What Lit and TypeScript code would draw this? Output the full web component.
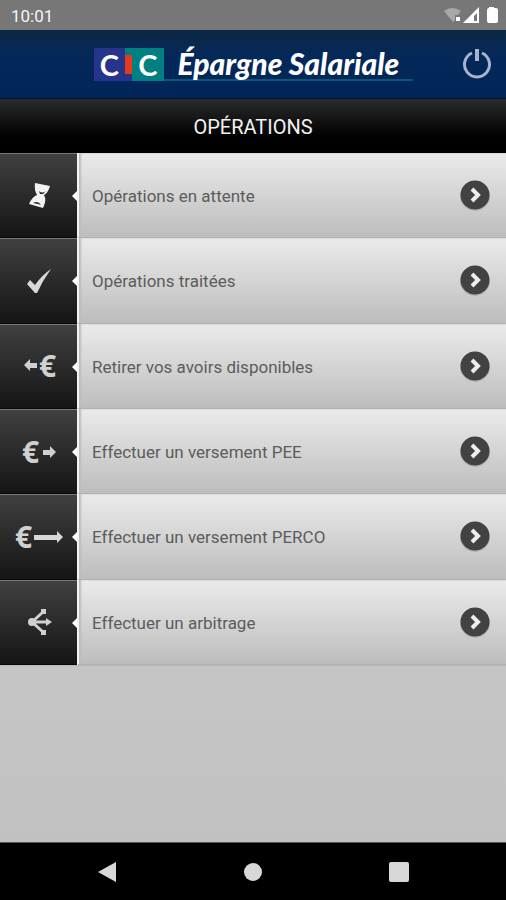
import { LitElement, html, css, svg } from "lit";
import { customElement } from "lit/decorators.js";

const hourglass = svg`
  <path d="M25 3 L40 6 Q38 13 34 15 Q37 20 33 28 L19 24 Q22 17 27 15 Q24 10 25 3Z" fill="#f2f2f2"/>
  <path d="M29 11 Q32 14 36 11 L33 14 H30Z M23 23 Q28 20 31 25 L28 24Z" fill="#222"/>`;
const check = svg`
  <path d="M17 19 L20 15 L25 20 Q32 10 41 4 Q33 15 27 28 L25 28Z" fill="#d8d8d8"/>`;
const euro = (x: number) => svg`<text x=${x} y="27" class="euro">€</text>`;
const withdraw = svg`
  <path d="M14 15 L20 9 V13 H27 V18 H20 V21Z" fill="#d0d0d0"/>${euro(29)}`;
const payPee = svg`
  ${euro(12)}<path d="M46 16 L40 10 V14 H33 V19 H40 V22Z" fill="#d0d0d0"/>`;
const payPerco = svg`
  ${euro(5)}<path d="M53 16 L47 10 V14 H24 V19 H47 V22Z" fill="#d8d8d8"/>`;
const arbitrage = svg`
  <path d="M22 16 L33 6 M22 16 L33 26 M22 16 H38" fill="none" stroke="#d0d0d0" stroke-width="3"/>
  <circle cx="22" cy="16" r="4" fill="#d0d0d0"/>
  <path d="M31 3 H36 V8 H31Z M31 24 H36 V29 H31Z M36 12 L42 16 L36 20Z" fill="#d0d0d0"/>`;

const operations = [
  { label: "Opérations en attente", icon: hourglass },
  { label: "Opérations traitées", icon: check },
  { label: "Retirer vos avoirs disponibles", icon: withdraw },
  { label: "Effectuer un versement PEE", icon: payPee },
  { label: "Effectuer un versement PERCO", icon: payPerco },
  { label: "Effectuer un arbitrage", icon: arbitrage },
];

@customElement("app-root")
export class AppRoot extends LitElement {
  static styles = css`
    :host {
      display: flex;
      flex-direction: column;
      min-height: 100vh;
      background: linear-gradient(#d4d4d4, #c0c0c0);
      font-family: Roboto, "Liberation Sans", sans-serif;
    }
    * { box-sizing: border-box; }
    svg { display: block; flex: none; }
    button { border: 0; padding: 0; background: none; cursor: pointer; }
    .status {
      display: flex;
      align-items: center;
      justify-content: space-between;
      height: 30px;
      padding: 2px 8px 0 11px;
      background: #777;
      color: #f4f4f4;
      font-size: 17px;
    }
    .brand {
      display: grid;
      grid-template-columns: 1fr auto 1fr;
      align-items: center;
      height: 69px;
      padding: 0 14px;
      background: linear-gradient(#0c2843, #04285a 40%, #022559);
      border-bottom: 1px solid #061630;
    }
    .logo {
      grid-column: 2;
      display: flex;
      width: 319px;
      height: 33px;
    }
    .cic {
      display: flex;
      width: 70px;
      color: #fff;
      font: bold 29px/33px Lato, sans-serif;
    }
    .cic span { flex: 1; text-align: center; background: #27348b; }
    .cic span:last-child { background: #008080; }
    .cic i {
      width: 7px;
      background: linear-gradient(#008080 7px, #e5391b 7px 26px, #27348b 26px);
    }
    .name {
      flex: 1;
      padding-left: 14px;
      border-bottom: 2px solid #075a72;
      color: #fff;
      font: italic 900 30px/31px Lato, sans-serif;
      white-space: nowrap;
    }
    .power { justify-self: end; }
    h1 {
      margin: 0;
      height: 54px;
      background: linear-gradient(#2a2c2b, #161616 35%, #000 70%);
      color: #f2f2f2;
      font-size: 20px;
      font-weight: 400;
      line-height: 56px;
      text-align: center;
    }
    ul {
      display: grid;
      grid-auto-rows: 1fr;
      min-height: 512px;
      margin: 0;
      padding: 0;
      list-style: none;
      box-shadow: 0 -1px 2px #000;
    }
    .row {
      display: flex;
      height: 100%;
      color: #5c5c5c;
      text-decoration: none;
    }
    .tile {
      position: relative;
      display: flex;
      align-items: center;
      justify-content: center;
      width: 77px;
      background: linear-gradient(#404040, #151515);
      border-top: 1px solid #777;
      border-bottom: 1px solid #080808;
    }
    .tile::after {
      content: "";
      position: absolute;
      right: 0;
      top: 37px;
      border: 5px solid transparent;
      border-left: 0;
      border-right-color: #fff;
    }
    .euro { fill: #d0d0d0; font: bold 30px "Open Sans", sans-serif; }
    .body {
      flex: 1;
      display: flex;
      align-items: center;
      justify-content: space-between;
      padding: 2px 14px 0 13px;
      background: linear-gradient(#ebebeb, #bdbdbd);
      border-left: 2px solid #f4f4f4;
      border-bottom: 1px solid #b2b2b2;
      box-shadow: inset 2px 0 2px #bbb;
      font-size: 17px;
    }
    .nav {
      display: flex;
      justify-content: space-around;
      align-items: center;
      height: 58px;
      margin-top: auto;
      padding: 0 34px;
      background: #000;
      border-top: 1px solid #555;
    }
  `;

  render() {
    return html`
      <div class="status">
        <time>10:01</time>
        <svg width="54" height="18" viewBox="0 0 54 18" fill="#fff">
          <path d="M0 4 Q8 -2 17 4 L14 8 H11 V13 L9 15Z" fill="#a8a8a8"/>
          <path d="M12 10h4v4h-4z"/>
          <path d="M35 0 V16 H19Z M33 6 L30 9 V14 H33Z" fill-rule="evenodd"/>
          <path d="M45 1V0h5v1h2q2 0 2 2v11q0 2-2 2h-7q-2 0-2-2V3q0-2 2-2z"/>
        </svg>
      </div>
      <header class="brand">
        <div class="logo">
          <div class="cic"><span>C</span><i></i><span>C</span></div>
          <div class="name">Épargne Salariale</div>
        </div>
        <button class="power" aria-label="Déconnexion">
          <svg width="30" height="30" viewBox="0 0 30 30" fill="none" stroke="#aab3ca" stroke-width="3">
            <path d="M10 4 A12.5 12.5 0 1 0 20 4"/>
            <path d="M15 0 V12" stroke-width="4"/>
          </svg>
        </button>
      </header>
      <h1>OPÉRATIONS</h1>
      <ul>
        ${operations.map((op) => html`
          <li>
            <a class="row" href="#">
              <span class="tile">
                <svg width="57" height="48" viewBox="0 -8 57 48">${op.icon}</svg>
              </span>
              <span class="body">
                ${op.label}
                <svg width="34" height="34" viewBox="0 0 34 34">
                  <circle cx="17" cy="17" r="15" fill="#999" opacity=".5"/>
                  <circle cx="17" cy="16" r="14.5" fill="#424242"/>
                  <path d="M14 10 L20 16 L14 22" fill="none" stroke="#eee" stroke-width="4"/>
                </svg>
              </span>
            </a>
          </li>`)}
      </ul>
      <nav class="nav">
        <button aria-label="Retour">
          <svg width="20" height="22" viewBox="0 0 20 22"><path d="M1 11 L19 1 V21Z" fill="#d8d8d8"/></svg>
        </button>
        <button aria-label="Accueil">
          <svg width="20" height="20" viewBox="0 0 20 20"><circle cx="10" cy="10" r="9" fill="#d8d8d8"/></svg>
        </button>
        <button aria-label="Applications récentes">
          <svg width="20" height="20" viewBox="0 0 20 20"><rect width="20" height="20" rx="2" fill="#d8d8d8"/></svg>
        </button>
      </nav>`;
  }
}
